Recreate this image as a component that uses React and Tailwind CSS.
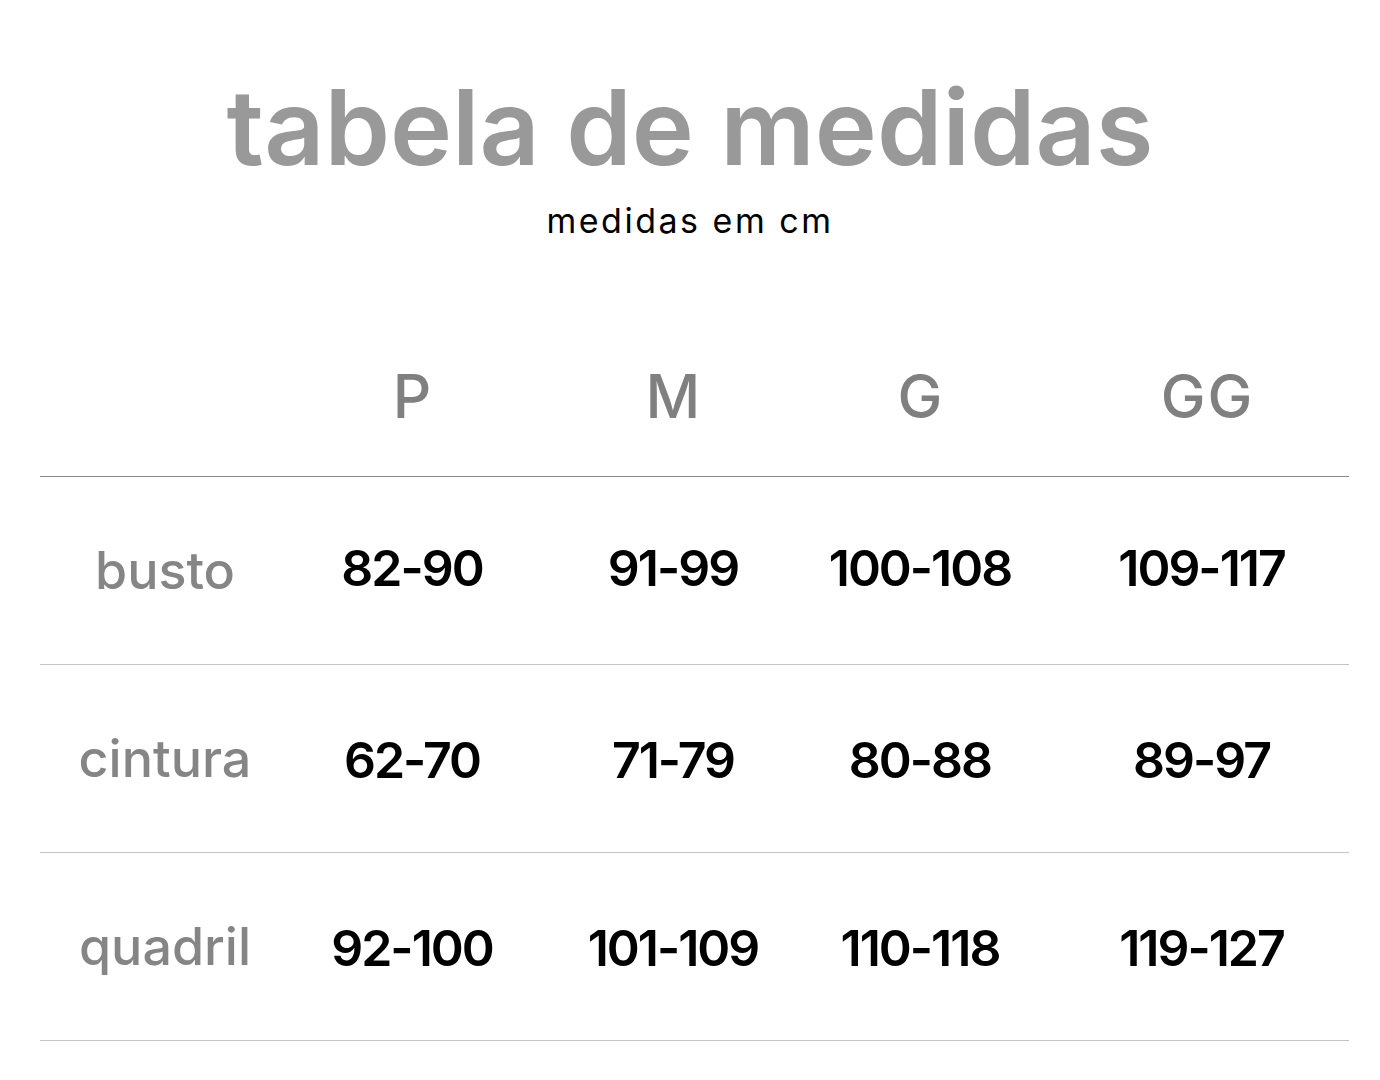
import React from "react";

const rows = [
  ["busto", "82-90", "91-99", "100-108", "109-117"],
  ["cintura", "62-70", "71-79", "80-88", "89-97"],
  ["quadril", "92-100", "101-109", "110-118", "119-127"],
];

const cols = "grid grid-cols-[250px_244px_278px_216px_1fr]";

export default function App() {
  return (
    <div className="w-[1380px] h-[1080px] bg-white font-['Inter',sans-serif] overflow-hidden">
      <div className="h-[256px] flex flex-col items-center">
        <h1 className="mt-[66px] h-[120px] flex items-center text-[105px] leading-none font-semibold text-[#999999]">
          tabela de medidas
        </h1>
        <p className="mt-[18px] text-[34px] leading-none tracking-[2.5px] text-black">medidas em cm</p>
      </div>
      <div className="ml-[40px] w-[1309px]">
        <div className={`${cols} h-[221px] pt-[60px] items-center border-b border-[#888888]`}>
          <div />
          <div className="text-center text-[60px] font-medium text-[#808080]">P</div>
          <div className="text-center text-[60px] font-medium text-[#808080]">M</div>
          <div className="text-center text-[60px] font-medium text-[#808080]">G</div>
          <div className="text-center pl-[38px] text-[60px] font-medium tracking-[2px] text-[#808080]">GG</div>
        </div>
        {rows.map((r, ri) => (
          <div key={r[0]} className={`${cols} h-[188px] items-center border-b border-[#c4c4c4]`}>
            <div className="text-center text-[52px] font-medium text-[#858585]">{r[0]}</div>
            {r.slice(1).map((v, i) => (
              <div
                key={i}
                className={`text-center text-[50px] font-semibold tracking-[-2px] text-black ${ri === 0 ? "-mt-[4px]" : "mt-[4px]"} ${i === 3 ? "pl-[26px]" : ""}`}
              >
                {v}
              </div>
            ))}
          </div>
        ))}
      </div>
    </div>
  );
}
